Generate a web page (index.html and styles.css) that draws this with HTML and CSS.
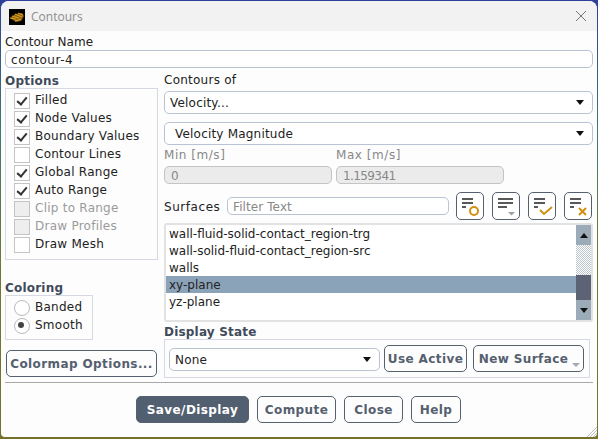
FILE: index.html
```html
<!DOCTYPE html>
<html>
  <head>
    <meta charset="UTF-8" />
    <title>Contours</title>
    <link rel="stylesheet" href="styles.css">
  </head>
  <body>
    <div class="dialog">
      <div class="titlebar">
        <svg class="logo" width="16" height="16" viewBox="0 0 16 16">
          <rect width="16" height="16" fill="#000"/>
          <path d="M1 9 L6 5 L13 4 L15 7 L12 12 L7 13 L4 11 Z" fill="#8a6410"/>
          <path d="M1 9 L7 10 M3 7 L10 9 M6 5 L13 8 M9 4 L14 6 M6 12 L12 10" stroke="#e0a020" stroke-width="1" fill="none"/>
        </svg>
        <span class="title">Contours</span>
        <svg class="close-x" width="12" height="12" viewBox="0 0 12 12">
          <path d="M1 1 L11 11 M11 1 L1 11" stroke="#777" stroke-width="1" fill="none"/>
        </svg>
      </div>

      <div class="content">
        <label class="name-label">Contour Name</label>
        <div class="field name-field">contour-4</div>

        <div class="columns">
          <div class="left">
            <div class="heading">Options</div>
            <div class="group options">
              <div class="check on">Filled</div>
              <div class="check on">Node Values</div>
              <div class="check on">Boundary Values</div>
              <div class="check">Contour Lines</div>
              <div class="check on">Global Range</div>
              <div class="check on">Auto Range</div>
              <div class="check off">Clip to Range</div>
              <div class="check off">Draw Profiles</div>
              <div class="check">Draw Mesh</div>
            </div>
            <div class="heading coloring-heading">Coloring</div>
            <div class="group coloring">
              <div class="radio">Banded</div>
              <div class="radio on">Smooth</div>
            </div>
            <button class="btn colormap">Colormap Options...</button>
          </div>

          <div class="right">
            <div class="plain-label">Contours of</div>
            <div class="select first">Velocity...<span class="arrow"></span></div>
            <div class="select second">Velocity Magnitude<span class="arrow"></span></div>
            <div class="range">
              <div class="range-col">
                <div class="muted">Min [m/s]</div>
                <div class="field readonly">0</div>
              </div>
              <div class="range-col">
                <div class="muted">Max [m/s]</div>
                <div class="field readonly">1.159341</div>
              </div>
            </div>
            <div class="surfaces-bar">
              <span class="surfaces-label">Surfaces</span>
              <div class="field filter">Filter Text</div>
              <button class="icon-btn">
                <svg width="24" height="24" viewBox="0 0 24 24">
                  <path d="M4 5 H15 M4 9 H15 M4 13 H8" stroke="#222" stroke-width="1.6" fill="none"/>
                  <circle cx="16" cy="17" r="4" stroke="#d09010" stroke-width="2" fill="none"/>
                </svg>
              </button>
              <button class="icon-btn">
                <svg width="24" height="24" viewBox="0 0 24 24">
                  <path d="M4 5 H19 M4 9 H19 M4 13 H13" stroke="#222" stroke-width="1.6" fill="none"/>
                  <path d="M14 18 H21 L17.500 21.500 Z" fill="#9aa0aa"/>
                </svg>
              </button>
              <button class="icon-btn">
                <svg width="24" height="24" viewBox="0 0 24 24">
                  <path d="M4 5 H15 M4 9 H15 M4 13 H8" stroke="#222" stroke-width="1.6" fill="none"/>
                  <path d="M10 16 L14 20 L22 13" stroke="#d09010" stroke-width="2" fill="none"/>
                </svg>
              </button>
              <button class="icon-btn">
                <svg width="24" height="24" viewBox="0 0 24 24">
                  <path d="M4 5 H15 M4 9 H15 M4 13 H8" stroke="#222" stroke-width="1.6" fill="none"/>
                  <path d="M13 14 L20 21 M20 14 L13 21" stroke="#d09010" stroke-width="2" fill="none"/>
                </svg>
              </button>
            </div>
            <div class="listbox">
              <div class="items">
                <div class="item">wall-fluid-solid-contact_region-trg</div>
                <div class="item">wall-solid-fluid-contact_region-src</div>
                <div class="item">walls</div>
                <div class="item selected">xy-plane</div>
                <div class="item">yz-plane</div>
              </div>
              <div class="scrollbar">
                <div class="scroll-btn"><span class="arrow up"></span></div>
                <div class="scroll-track"></div>
                <div class="scroll-thumb"></div>
                <div class="scroll-btn bottom"><span class="arrow"></span></div>
              </div>
            </div>
            <div class="heading state-heading">Display State</div>
            <div class="group state">
              <div class="select state-select">None<span class="arrow"></span></div>
              <button class="btn use-active">Use Active</button>
              <button class="btn new-surface">New Surface<span class="mini-arrow"></span></button>
            </div>
          </div>
        </div>

        <div class="footer">
          <button class="btn primary">Save/Display</button>
          <button class="btn compute">Compute</button>
          <button class="btn close">Close</button>
          <button class="btn help">Help</button>
        </div>
      </div>
      <svg class="grip" width="12" height="12" viewBox="0 0 12 12">
        <path d="M12 2 L2 12 M12 5 L5 12 M12 8 L8 12" stroke="#bbb" stroke-width="1" fill="none"/>
      </svg>
    </div>
  </body>
</html>
```

FILE: styles.css
```css
* {
  margin: 0;
  padding: 0;
  box-sizing: border-box;
}
html, body {
  width: 598px;
  height: 439px;
  overflow: hidden;
}
body {
  font-family: "DejaVu Sans", sans-serif;
  font-size: 12px;
  color: #222;
  background: linear-gradient(180deg, #2f3f9a 0%, #3f7a70 30%, #6f7a30 60%, #77702a 100%);
  padding: 1px 1px 2px 1px;
}
.dialog {
  position: relative;
  width: 596px;
  height: 436px;
  background: #fdfdfd;
  border-radius: 8px 8px 4px 4px;
  overflow: hidden;
}

.titlebar {
  height: 30px;
  background: #f2f2f2;
  display: flex;
  align-items: center;
  padding: 0 10px 0 8px;
}
.logo {
  margin-top: 1px;
}
.title {
  margin-left: 6px;
  font-family: "Open Sans", sans-serif;
  color: #8c8c8c;
}
.close-x {
  margin-left: auto;
  margin-top: -1px;
}

.content {
  padding: 0 4px;
}
.name-label {
  display: block;
  height: 19px;
  line-height: 22px;
  letter-spacing: 0.1px;
}
.field {
  height: 18px;
  line-height: 18px;
  border: 1px solid #b9c3d4;
  border-radius: 5px;
  background: #fff;
  padding-left: 5px;
  letter-spacing: 0.55px;
}
.name-field {
  width: 588px;
}

.columns {
  display: flex;
  margin-top: 3px;
}
.left {
  width: 159px;
}
.right {
  width: 429px;
}
.heading {
  height: 17px;
  line-height: 20px;
  font-weight: bold;
  color: #3f4a5a;
  letter-spacing: 0.2px;
}
.group {
  border: 1px solid #d5d9e4;
}
.options {
  width: 153px;
  height: 172px;
  padding-top: 2px;
}
.check, .radio {
  height: 18px;
  line-height: 19px;
  padding-left: 29px;
  position: relative;
  letter-spacing: 0.25px;
}
.check::before {
  content: "";
  position: absolute;
  left: 8px;
  top: 2px;
  width: 14px;
  height: 14px;
  border: 1px solid #c4c4c4;
  background: #fff;
}
.check.on::after {
  content: "";
  position: absolute;
  left: 13px;
  top: 4px;
  width: 4px;
  height: 8px;
  border: solid #333;
  border-width: 0 2px 2px 0;
  transform: rotate(40deg);
}
.check.off {
  color: #9a9a9a;
}
.check.off::before {
  background: #eeeeee;
}
.coloring-heading {
  margin-top: 18px;
}
.coloring {
  width: 88px;
  height: 45px;
  padding-top: 2px;
}
.radio::before {
  content: "";
  position: absolute;
  left: 8px;
  top: 2px;
  width: 14px;
  height: 14px;
  border: 1px solid #bbb;
  border-radius: 50%;
  background: #fff;
}
.radio.on::after {
  content: "";
  position: absolute;
  left: 12px;
  top: 6px;
  width: 6px;
  height: 6px;
  border-radius: 50%;
  background: #444;
}

.btn {
  height: 27px;
  border: 1px solid #56616f;
  border-radius: 5px;
  background: #fdfdfd;
  color: #55606f;
  font-family: "DejaVu Sans", sans-serif;
  font-size: 12px;
  font-weight: bold;
  letter-spacing: 0.4px;
  white-space: nowrap;
}
.colormap {
  display: block;
  width: 151px;
  margin: 10px 0 0 1px;
  padding: 0;
}

.plain-label {
  height: 17px;
  line-height: 19px;
  letter-spacing: 0.25px;
}
.select {
  position: relative;
  height: 23px;
  line-height: 22px;
  border: 1px solid #b9c3d4;
  border-radius: 5px;
  background: #fff;
  padding-left: 5px;
  letter-spacing: 0.2px;
}
.select.first {
  width: 429px;
  margin-top: 3px;
}
.select.second {
  width: 429px;
  margin-top: 8px;
  padding-left: 10px;
}
.arrow {
  position: absolute;
  right: 8px;
  top: 8px;
  width: 0;
  height: 0;
  border-left: 4.500px solid transparent;
  border-right: 4.500px solid transparent;
  border-top: 5px solid #111;
}
.range {
  display: flex;
  gap: 4px;
  margin-top: 1px;
}
.range-col {
  width: 168px;
}
.muted {
  height: 20px;
  line-height: 18px;
  color: #888;
  letter-spacing: 0.55px;
}
.readonly {
  background: #ebebeb;
  border-color: #c4c4c4;
  color: #888;
  padding-left: 6px;
  letter-spacing: -0.6px;
}
.surfaces-bar {
  display: flex;
  align-items: center;
  height: 28px;
  margin-top: 8px;
}
.surfaces-label {
  width: 63px;
  padding-top: 1px;
  letter-spacing: 0.55px;
}
.filter {
  width: 222px;
  color: #888;
  margin-right: 7px;
  letter-spacing: 0.1px;
}
.icon-btn {
  width: 28px;
  height: 28px;
  margin-right: 8px;
  border: 1px solid #56616f;
  border-radius: 5px;
  background: #fff;
  display: flex;
  align-items: center;
  justify-content: center;
}
.icon-btn:last-child {
  margin-right: 0;
}

.listbox {
  display: flex;
  width: 429px;
  height: 99px;
  margin-top: 3px;
  border: 2px solid #e2e2e2;
  border-radius: 3px;
  background: #fff;
}
.items {
  flex: 1;
}
.item {
  height: 17px;
  line-height: 19px;
  padding-left: 3px;
}
.item.selected {
  background: #8ba3b8;
}
.scrollbar {
  width: 15px;
  display: flex;
  flex-direction: column;
}
.scroll-btn {
  position: relative;
  height: 20px;
  background: #9bacb8;
}
.scroll-btn .arrow {
  right: 3px;
  top: 8px;
}
.scroll-btn .arrow.up {
  border-top: 0;
  border-bottom: 5px solid #111;
}
.scroll-track {
  height: 30px;
  background: repeating-conic-gradient(#bcc6cc 0 25%, #fff 0 50%) 0 0 / 2px 2px;
}
.scroll-thumb {
  height: 25px;
  background: #5b6375;
}

.state-heading {
  margin-top: 1px;
  height: 16px;
  line-height: 19px;
}
.state {
  display: flex;
  align-items: center;
  width: 426px;
  height: 39px;
  padding-left: 4px;
}
.state-select {
  width: 211px;
  margin-top: 2px;
}
.use-active {
  width: 83px;
  margin-left: 4px;
  padding: 0;
}
.new-surface {
  position: relative;
  width: 111px;
  margin-left: 6px;
  padding: 0 10px 0 0;
}
.mini-arrow {
  position: absolute;
  right: 3px;
  bottom: 4px;
  width: 0;
  height: 0;
  border-left: 4px solid transparent;
  border-right: 4px solid transparent;
  border-top: 4px solid #a5a9b2;
}

.footer {
  display: flex;
  justify-content: flex-start;
  height: 41px;
  margin-top: 4px;
  padding: 13px 0 0 131px;
  border-top: 1px solid #a9a9a9;
  width: 588px;
}
.footer .btn {
  margin-right: 8px;
  padding: 0;
}
.primary {
  width: 113px;
  background: #525f70;
  color: #fff;
}
.compute {
  width: 79px;
}
.close {
  width: 59px;
}
.help {
  width: 50px;
}
.grip {
  position: absolute;
  right: 0;
  bottom: 0;
}
```
